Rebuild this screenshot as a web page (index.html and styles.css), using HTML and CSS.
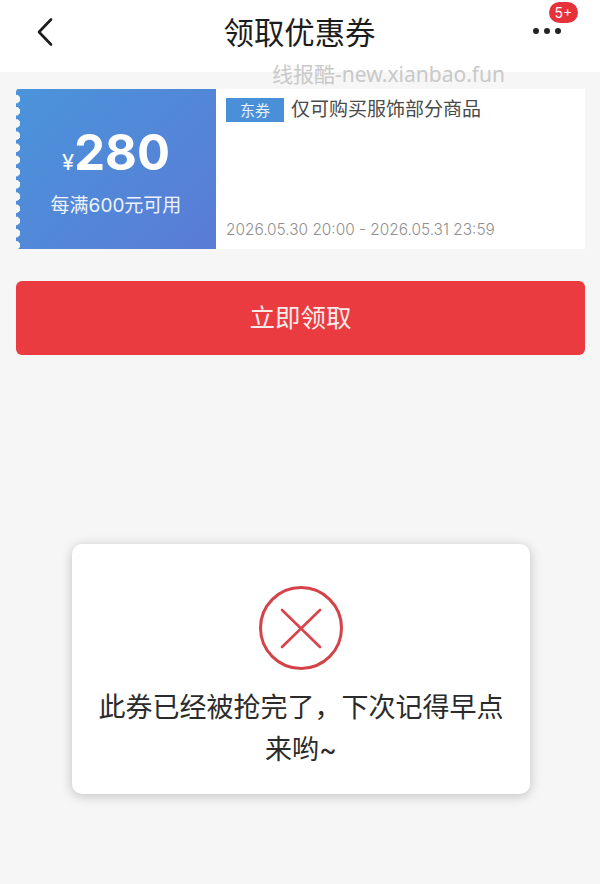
FILE: index.html
```html
<!DOCTYPE html>
<html lang="zh-CN">
<head>
    <meta charset="UTF-8">
    <meta name="viewport" content="width=device-width, initial-scale=1.0">
    <title>领取优惠券</title>
    <link rel="stylesheet" href="styles.css">
</head>
<body>
    <!-- 顶部导航 -->
    <header class="nav-bar">
        <div class="nav-back">
            <svg width="18" height="30" viewBox="0 0 18 30"><path d="M15 2.5 3 15l12 12.500" fill="none" stroke="#1c1c1c" stroke-width="2.600" stroke-linecap="round" stroke-linejoin="round"/></svg>
        </div>
        <h1 class="nav-title">领取优惠券</h1>
        <div class="nav-more">
            <span class="dot"></span><span class="dot"></span><span class="dot"></span>
            <span class="nav-badge">5+</span>
        </div>
    </header>

    <div class="watermark">线报酷-new.xianbao.fun</div>

    <main class="content">
        <!-- 优惠券 -->
        <section class="coupon">
            <div class="coupon-left">
                <div class="coupon-amount"><span class="coupon-yen">¥</span>280</div>
                <div class="coupon-limit">每满600元可用</div>
            </div>
            <div class="coupon-right">
                <div class="coupon-desc"><span class="coupon-tag">东券</span>仅可购买服饰部分商品</div>
                <div class="coupon-date">2026.05.30 20:00 - 2026.05.31 23:59</div>
            </div>
        </section>

        <div class="get-button">立即领取</div>
    </main>

    <!-- 提示弹窗 -->
    <div class="toast">
        <svg class="toast-icon" width="86" height="86" viewBox="0 0 86 86">
            <circle cx="43" cy="43" r="40.500" fill="none" stroke="#d4424a" stroke-width="3"/>
            <path d="M24 25 62 62M62 25 24 62" fill="none" stroke="#d9434b" stroke-width="2.600" stroke-linecap="round"/>
        </svg>
        <p class="toast-text">此券已经被抢完了，下次记得早点来哟~</p>
    </div>
</body>
</html>
```

FILE: styles.css
```css
html, body {
    margin: 0;
    padding: 0;
}

body {
    position: relative;
    height: 884px;
    overflow: hidden;
    background-color: #f6f6f6;
    font-family: "Inter", "Noto Sans CJK SC", sans-serif;
}

/* 顶部导航 */
.nav-bar {
    display: flex;
    align-items: center;
    justify-content: space-between;
    height: 72px;
    padding: 0 36px;
    background-color: #fff;
    box-sizing: border-box;
}

.nav-back {
    display: flex;
    width: 18px;
    margin-bottom: 8px;
}

.nav-title {
    margin: 0 0 11px 12px;
    font-size: 30.400px;
    font-weight: 400;
    color: #1c1c1c;
}

.nav-more {
    position: relative;
    display: flex;
    gap: 5px;
    width: 30px;
    margin: 0 1px 0 0;
    padding-bottom: 10px;
}

.dot {
    width: 6px;
    height: 6px;
    border-radius: 50%;
    background-color: #222;
}

.nav-badge {
    position: absolute;
    top: -26px;
    left: 16px;
    width: 29px;
    height: 21px;
    border-radius: 11px;
    background-color: #e5313a;
    color: #fff;
    font-size: 14px;
    line-height: 21px;
    text-align: center;
}

.watermark {
    position: absolute;
    top: 60px;
    left: 272px;
    font-family: "Noto Sans", "Noto Sans CJK SC", sans-serif;
    font-size: 21px;
    line-height: 28px;
    color: #c9c9c9;
    white-space: nowrap;
}

.content {
    display: flex;
    flex-direction: column;
    gap: 32px;
    padding: 17px 15px 0 16px;
}

/* 优惠券 */
.coupon {
    display: flex;
    height: 160px;
}

.coupon-left {
    position: relative;
    display: flex;
    flex-direction: column;
    align-items: center;
    width: 200px;
    padding-top: 35px;
    box-sizing: border-box;
    border-radius: 3px 0 0 3px;
    background: linear-gradient(135deg, #4a94da 0%, #5a7bd6 100%);
    color: #fff;
}

/* 左侧锯齿 */
.coupon-left::before {
    content: '';
    position: absolute;
    top: 4px;
    bottom: 0;
    left: 0;
    width: 5px;
    background: radial-gradient(circle at 0 6px, #f6f6f6 4px, transparent 4.500px) 0 0 / 5px 12.200px repeat-y;
}

.coupon-amount {
    font-size: 49px;
    font-weight: 700;
    line-height: 58px;
}

.coupon-yen {
    margin-right: 0;
    font-size: 22px;
    font-weight: 400;
}

.coupon-limit {
    margin-top: 2px;
    font-size: 19px;
    line-height: 26px;
    color: #eef3fb;
}

.coupon-right {
    display: flex;
    flex: 1;
    flex-direction: column;
    justify-content: space-between;
    padding: 9px 10px 8px 10px;
    background-color: #fff;
}

.coupon-desc {
    display: flex;
    align-items: flex-start;
    height: 24px;
    font-size: 19px;
    line-height: 24px;
    color: #4a4a4a;
}

.coupon-tag {
    width: 58px;
    height: 24px;
    margin-right: 7px;
    background-color: #4a90d9;
    color: #e8f1fb;
    font-size: 15px;
    line-height: 25px;
    text-align: center;
}

.coupon-date {
    font-size: 15.400px;
    font-weight: 300;
    line-height: 22px;
    color: #8f8f8f;
}

.get-button {
    height: 74px;
    border-radius: 6px;
    background-color: #ea3b40;
    color: #fbeaea;
    font-size: 25.500px;
    line-height: 74px;
    text-align: center;
}

/* 提示弹窗 */
.toast {
    position: absolute;
    top: 544px;
    left: 72px;
    display: flex;
    flex-direction: column;
    align-items: center;
    width: 458px;
    height: 250px;
    padding: 41px 24px 0;
    box-sizing: border-box;
    border-radius: 10px;
    background-color: #fff;
    box-shadow: 0 2px 12px rgba(0, 0, 0, 0.22);
}

.toast-icon {
    flex: none;
}

.toast-text {
    margin: 16px 0 0 0;
    font-size: 27px;
    line-height: 42px;
    color: #2b2b2b;
    text-align: center;
}
```
